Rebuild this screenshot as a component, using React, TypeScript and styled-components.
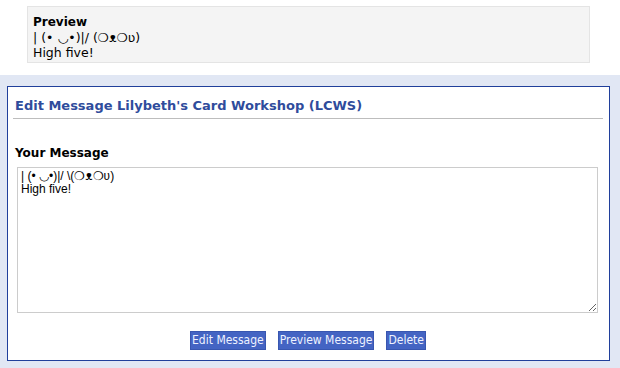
import React from "react";
import styled, { createGlobalStyle } from "styled-components";

const Global = createGlobalStyle`
  html, body { margin: 0; padding: 0; background: #ffffff; }
  body { font-family: "DejaVu Sans", Verdana, sans-serif; font-size: 12px; color: #000; }
`;

const Page = styled.div`
  width: 620px;
  height: 368px;
  display: flex;
  flex-direction: column;
  overflow: hidden;
`;

const TopArea = styled.div`
  background: #ffffff;
  padding: 6px 30px 12px 27px;
`;

const PreviewBox = styled.div`
  background: #f4f4f4;
  border: 1px solid #e4e4e4;
  height: 47px;
  padding: 8px 5px 0 5px;
  font-size: 12.5px;
  line-height: 15px;
`;

const PreviewTitle = styled.div`
  font-size: 12px;
  font-weight: bold;
`;

const Line = styled.div``;

const Workspace = styled.div`
  flex: 1;
  background: #e1e7f4;
  padding: 11px 10px 7px 7px;
  display: flex;
`;

const Panel = styled.div`
  flex: 1;
  background: #ffffff;
  border: 1px solid #203f9b;
  padding: 12px 6px 0 5px;
  display: flex;
  flex-direction: column;
`;

const Heading = styled.h2`
  margin: 0;
  padding: 0 0 5px 2px;
  font-size: 13px;
  line-height: 14px;
  font-weight: bold;
  color: #2f4c9c;
  border-bottom: 1px solid #bdbdbd;
`;

const Label = styled.h3`
  margin: 27px 0 0 2px;
  font-size: 12px;
  line-height: 14px;
  font-weight: bold;
  color: #000;
`;

const MessageArea = styled.textarea`
  margin: 7px 0 0 4px;
  width: 581px;
  height: 146px;
  box-sizing: border-box;
  border: 1px solid #cccccc;
  padding: 2px 3px;
  font-family: "Liberation Sans", Arial, sans-serif;
  font-size: 12px;
  line-height: 13px;
  color: #000;
  resize: vertical;
  outline: none;
`;

const Actions = styled.div`
  display: flex;
  justify-content: center;
  gap: 12px;
  margin-top: 18px;
`;

const ActionButton = styled.button`
  height: 19px;
  padding: 0 1px;
  background: #4464c3;
  border: 1px solid #3856b0;
  color: #eef2ff;
  font-family: "DejaVu Sans Condensed", "DejaVu Sans", sans-serif;
  font-size: 12px;
  line-height: 17px;
  cursor: pointer;
`;

const text = "| (• ◡•)|/ \\(❍ᴥ❍ʋ)\nHigh five!";

export default function App() {
  return (
    <Page>
      <Global />
      <TopArea>
        <PreviewBox>
          <PreviewTitle>Preview</PreviewTitle>
          <Line>| (• ◡•)|/ (❍ᴥ❍ʋ)</Line>
          <Line>High five!</Line>
        </PreviewBox>
      </TopArea>
      <Workspace>
        <Panel>
          <Heading>Edit Message Lilybeth's Card Workshop (LCWS)</Heading>
          <Label>Your Message</Label>
          <MessageArea defaultValue={text} />
          <Actions>
            <ActionButton>Edit Message</ActionButton>
            <ActionButton>Preview Message</ActionButton>
            <ActionButton>Delete</ActionButton>
          </Actions>
        </Panel>
      </Workspace>
    </Page>
  );
}
